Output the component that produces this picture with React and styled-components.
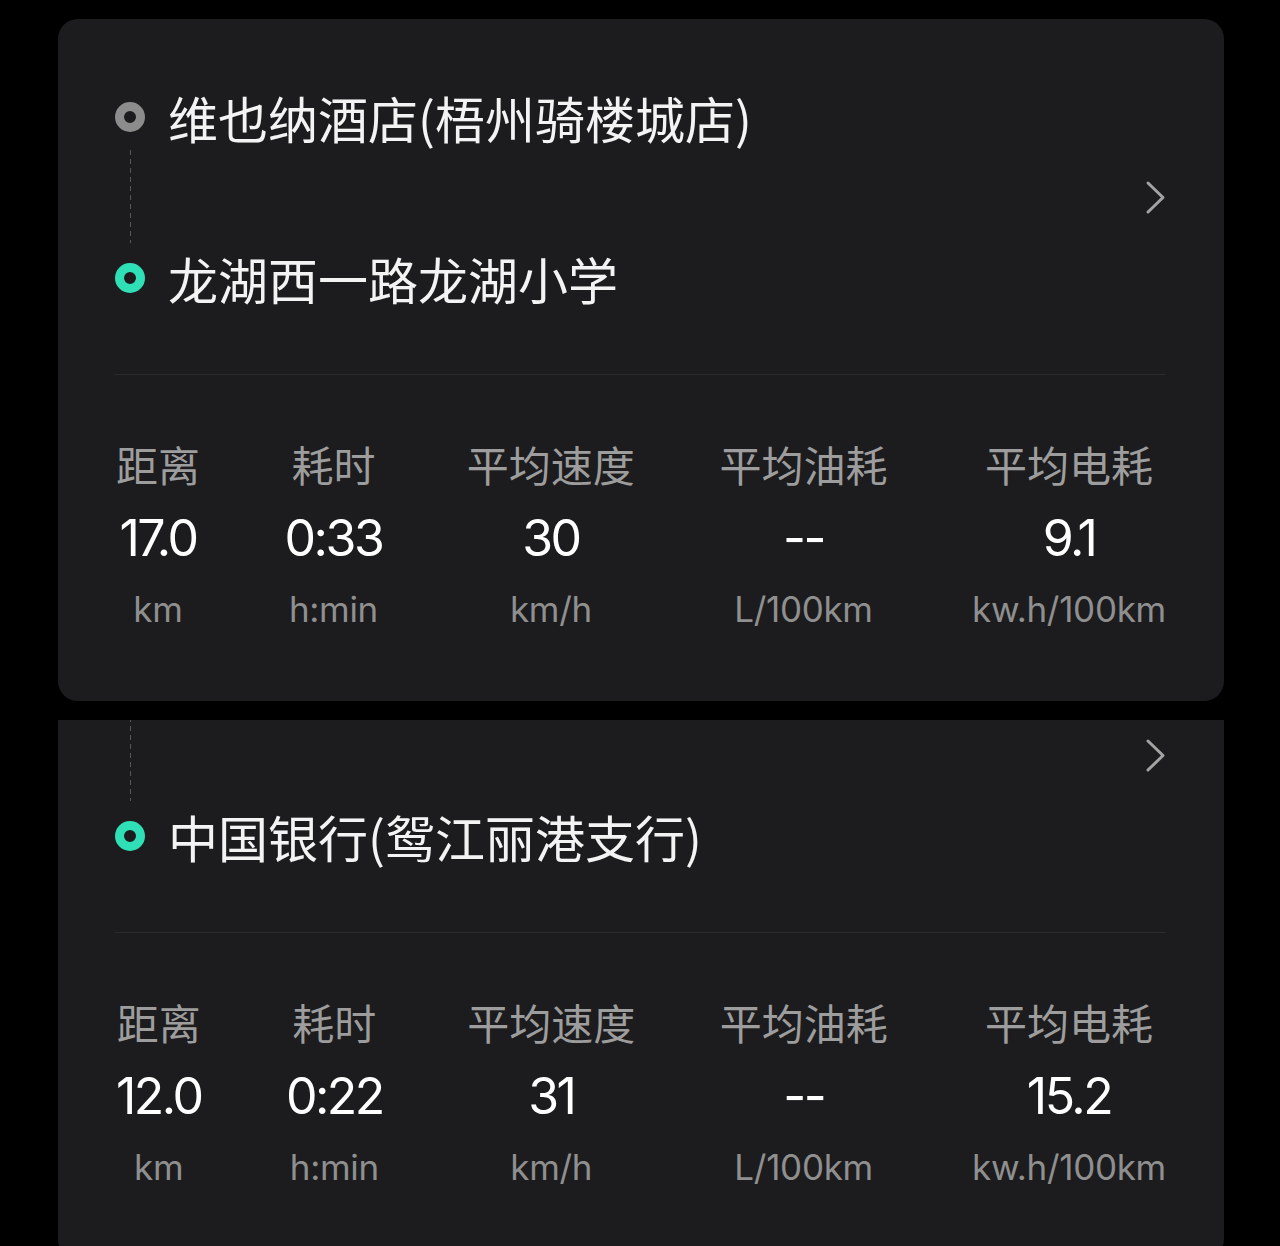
import React from 'react';
import styled, { createGlobalStyle } from 'styled-components';

const GlobalStyle = createGlobalStyle`
  html, body {
    margin: 0;
    padding: 0;
    background: #000;
    overflow: hidden;
  }
`;

const Page = styled.div`
  display: flex;
  flex-direction: column;
  gap: 19px;
  padding: 19px 56px 0 58px;
  height: 1246px;
  box-sizing: border-box;
  font-family: Inter, "Noto Sans CJK SC", sans-serif;
`;

// the second card is scrolled: its top part is under the first one
const Clip = styled.div`
  overflow: hidden;
  flex: 1;
`;

const Card = styled.div`
  background: #1c1c1e;
  border-radius: 20px;
  padding: 68px 58px 56px 57px;
  margin-top: ${props => (props.$offset ? `-${props.$offset}px` : '0')};
`;

const Route = styled.div`
  display: flex;
  align-items: center;
  padding-bottom: 66px;
  border-bottom: 1px solid #2b2b2d;
`;

const Stops = styled.div`
  flex: 1;
  display: flex;
  flex-direction: column;
`;

const Stop = styled.div`
  display: flex;
  align-items: center;
  gap: 23px;
  height: 60px;
`;

const Dot = styled.span`
  width: 30px;
  height: 30px;
  box-sizing: border-box;
  border-radius: 50%;
  border: 9px solid ${props => (props.$end ? '#2fe0b6' : '#8c8c8c')};
  flex-shrink: 0;
`;

const Place = styled.span`
  font-family: "Noto Sans CJK SC", Inter, sans-serif;
  font-size: 50px;
  line-height: 60px;
  color: #f3f3f3;
  white-space: nowrap;
`;

const Connector = styled.div`
  height: 101px;
  display: flex;
  justify-content: flex-start;
  padding-left: 15px;

  &::before {
    content: '';
    width: 1px;
    margin: 3px 0 5px;
    background: repeating-linear-gradient(
      to bottom,
      #58585a 0,
      #58585a 5px,
      transparent 5px,
      transparent 9px
    );
  }
`;

const Chevron = styled.svg`
  flex-shrink: 0;
  margin-right: -2px;
`;

const Stats = styled.div`
  display: flex;
  justify-content: space-between;
  padding: 54px 0 0 1px;
`;

const Stat = styled.div`
  display: flex;
  flex-direction: column;
  align-items: center;
  text-align: center;
`;

const Label = styled.span`
  font-family: "Noto Sans CJK SC", sans-serif;
  font-size: 42px;
  line-height: 69px;
  padding-bottom: 4px;
  color: #9d9d9d;
  white-space: nowrap;
`;

const Value = styled.span`
  font-size: 50px;
  line-height: 72px;
  letter-spacing: -2.5px;
  color: #ffffff;
  white-space: nowrap;
`;

const Unit = styled.span`
  font-size: 35px;
  line-height: 71px;
  letter-spacing: -0.3px;
  color: #8f8f8f;
  white-space: nowrap;
`;

const trips = [
  {
    from: '维也纳酒店(梧州骑楼城店)',
    to: '龙湖西一路龙湖小学',
    stats: ['17.0', '0:33', '30', '--', '9.1'],
  },
  {
    from: '',
    to: '中国银行(鸳江丽港支行)',
    stats: ['12.0', '0:22', '31', '--', '15.2'],
  },
];

const labels = [
  ['距离', 'km'],
  ['耗时', 'h:min'],
  ['平均速度', 'km/h'],
  ['平均油耗', 'L/100km'],
  ['平均电耗', 'kw.h/100km'],
];

const TripCard = ({ trip, offset }) => (
  <Card $offset={offset}>
    <Route>
      <Stops>
        <Stop>
          <Dot />
          <Place>{trip.from}</Place>
        </Stop>
        <Connector />
        <Stop>
          <Dot $end />
          <Place>{trip.to}</Place>
        </Stop>
      </Stops>
      <Chevron width="24" height="36" viewBox="0 0 24 36">
        <path d="M4 3 L19 17.5 L4 32" fill="none" stroke="#a3a3a3" strokeWidth="3" strokeLinecap="round" strokeLinejoin="round" />
      </Chevron>
    </Route>
    <Stats>
      {labels.map(([label, unit], i) => (
        <Stat key={label}>
          <Label>{label}</Label>
          <Value>{trip.stats[i]}</Value>
          <Unit>{unit}</Unit>
        </Stat>
      ))}
    </Stats>
  </Card>
);

const App = () => (
  <>
    <GlobalStyle />
    <Page>
      <TripCard trip={trips[0]} />
      <Clip>
        <TripCard trip={trips[1]} offset={143} />
      </Clip>
    </Page>
  </>
);

export default App;
